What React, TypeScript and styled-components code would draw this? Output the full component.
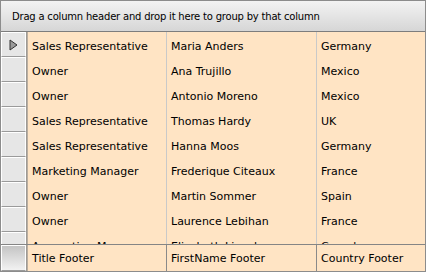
import React from "react";
import styled, { createGlobalStyle } from "styled-components";

const Global = createGlobalStyle`
  html, body { margin: 0; padding: 0; background: #fff; }
  body { font-family: "DejaVu Sans", Verdana, sans-serif; }
`;

const Grid = styled.div`
  width: 426px;
  height: 272px;
  box-sizing: border-box;
  border: 1px solid #8c8c8c;
  display: flex;
  flex-direction: column;
  overflow: hidden;
  background: #ffe4c4;
`;

const GroupPanel = styled.div`
  height: 31px;
  flex: none;
  box-sizing: border-box;
  border-bottom: 1px solid #7d7d7d;
  background: linear-gradient(#f3f3f3, #d6d6d6);
  display: flex;
  align-items: center;
  padding-left: 11px;
  font-size: 10px;
  letter-spacing: -0.2px;
  color: #000;
`;

const Body = styled.div`
  flex: 1;
  overflow: hidden;
  display: flex;
  flex-direction: column;
`;

const Row = styled.div`
  display: flex;
  height: 25px;
  flex: none;
`;

const Indicator = styled.div<{ $footer?: boolean }>`
  width: 25px;
  flex: none;
  box-sizing: border-box;
  background: ${(p) => (p.$footer ? "linear-gradient(#c4c4c4, #f2f2f2)" : "#e6e6e6")};
  border-top: 1px solid #fff;
  border-left: 1px solid #fff;
  border-right: 1px solid #fff;
  border-bottom: 1px solid #9a9a9a;
  display: flex;
  align-items: center;
  justify-content: center;
`;

const Divider = styled.div`
  width: 2px;
  flex: none;
  background: linear-gradient(90deg, #8f8f8f, #c9b9a6);
`;

const Cell = styled.div<{ $w: number; $last?: boolean; $footer?: boolean }>`
  width: ${(p) => p.$w}px;
  flex: none;
  box-sizing: border-box;
  border-right: ${(p) => (p.$last ? "none" : p.$footer ? "1px solid #8a8a8a" : "1px solid #c9c9c9")};
  padding-left: 4px;
  padding-top: ${(p) => (p.$footer ? "0" : "3px")};
  display: flex;
  align-items: center;
  font-size: 11px;
  color: #000;
  white-space: nowrap;
  overflow: hidden;
`;

const FooterRow = styled(Row)`
  height: 27px;
  border-top: 1px solid #858585;
  box-sizing: border-box;
`;

const data: [string, string, string][] = [
  ["Sales Representative", "Maria Anders", "Germany"],
  ["Owner", "Ana Trujillo", "Mexico"],
  ["Owner", "Antonio Moreno", "Mexico"],
  ["Sales Representative", "Thomas Hardy", "UK"],
  ["Sales Representative", "Hanna Moos", "Germany"],
  ["Marketing Manager", "Frederique Citeaux", "France"],
  ["Owner", "Martin Sommer", "Spain"],
  ["Owner", "Laurence Lebihan", "France"],
  ["Accounting Manager", "Elizabeth Lincoln", "Canada"],
];

const widths = [139, 150, 108];

const Arrow = () => (
  <svg width="9" height="12" viewBox="0 0 9 12">
    <path d="M1 1 L8 6 L1 11 Z" fill="#9a9a9a" stroke="#333" strokeWidth="1" strokeLinejoin="miter" />
  </svg>
);

export default function App() {
  return (
    <>
      <Global />
      <Grid>
        <GroupPanel>Drag a column header and drop it here to group by that column</GroupPanel>
        <Body>
          {data.map((r, i) => (
            <Row key={i}>
              <Indicator>{i === 0 && <Arrow />}</Indicator>
              <Divider />
              {r.map((t, j) => (
                <Cell key={j} $w={widths[j]} $last={j === 2}>
                  {t}
                </Cell>
              ))}
            </Row>
          ))}
        </Body>
        <FooterRow>
          <Indicator $footer />
          <Divider />
          <Cell $w={widths[0]} $footer>Title Footer</Cell>
          <Cell $w={widths[1]} $footer>FirstName Footer</Cell>
          <Cell $w={widths[2]} $footer $last>Country Footer</Cell>
        </FooterRow>
      </Grid>
    </>
  );
}
